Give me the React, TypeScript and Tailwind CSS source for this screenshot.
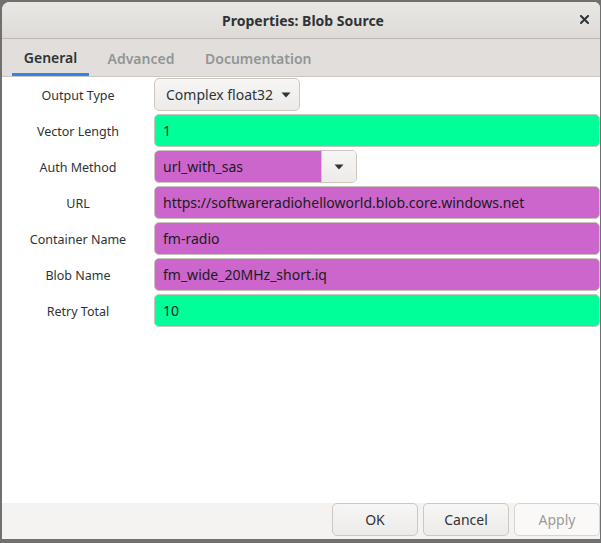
import React from 'react';

const font = { fontFamily: '"Noto Sans", "Open Sans", sans-serif' };

const Arrow = () => (
  <svg width="10" height="6" viewBox="0 0 10 6" className="shrink-0">
    <path d="M0.5 0.5 L9.5 0.5 L5 5.5 Z" fill="#2e3436" />
  </svg>
);

const Label = ({ text }: { text: string }) => (
  <div className="w-[152px] shrink-0 text-center text-[12.5px] text-[#2e3436] pt-[3px]">{text}</div>
);

const Field = ({ value, color }: { value: string; color: string }) => (
  <div
    className={`flex-1 h-[33px] flex items-center pl-[8px] text-[14px] text-[#1b1b1b] rounded-[5px] border border-[#c9c3bd] ${color}`}
  >
    {value}
  </div>
);

const Row = ({ label, children }: { label: string; children: React.ReactNode }) => (
  <div className="flex items-center h-[33px]">
    <Label text={label} />
    {children}
  </div>
);

const App = () => {
  return (
    <div className="w-[601px] h-[543px] bg-[#707070] pl-[2px] pt-[2px] pb-[4px] pr-[1px] overflow-hidden" style={font}>
      <div className="w-full h-full flex flex-col bg-white rounded-tl-[8px] rounded-tr-[6px] overflow-hidden">
        {/* title bar */}
        <div className="h-[37px] shrink-0 flex items-center bg-gradient-to-b from-[#e9e7e4] to-[#dedbd7] border-b border-[#c0b9b2] relative">
          <div className="flex-1 text-center font-bold text-[14px] text-[#2e3436] pl-[4px]">Properties: Blob Source</div>
          <div className="absolute right-[11px] top-[13px]">
            <svg width="9" height="9" viewBox="0 0 9 9">
              <path d="M1 1 L8 8 M8 1 L1 8" stroke="#2e3436" strokeWidth="2" strokeLinecap="square" />
            </svg>
          </div>
        </div>

        {/* tabs */}
        <div className="h-[38px] shrink-0 flex items-end bg-[#e1dedb] border-b border-[#cdc7c2] pl-[10px]">
          <div className="w-[77px] h-[37px] flex items-center justify-center border-b-[3px] border-[#3584e4] text-[14px] font-semibold text-[#2e3436] pt-[3px]">General</div>
          <div className="w-[104px] h-[37px] flex items-center justify-center text-[14px] font-semibold text-[#929595] pt-[1px]">Advanced</div>
          <div className="w-[120px] h-[37px] flex items-center justify-start pl-[12px] text-[14px] font-semibold text-[#929595] pt-[1px]">Documentation</div>
        </div>

        {/* params */}
        <div className="flex-1 flex flex-col gap-[3px] pt-[1px]">
          <Row label="Output Type">
            <div className="h-[33px] w-[146px] flex items-center gap-[8px] pl-[11px] rounded-[5px] border border-[#cdc7c2] bg-gradient-to-b from-[#f7f6f5] to-[#edebe9] text-[14px] text-[#2e3436]">
              Complex float32
              <Arrow />
            </div>
          </Row>
          <Row label="Vector Length">
            <Field value="1" color="bg-[#00ff99]" />
          </Row>
          <Row label="Auth Method">
            <div className="h-[33px] w-[203px] flex rounded-[5px] border border-[#cdc7c2] overflow-hidden">
              <div className="flex-1 flex items-center pl-[8px] bg-[#cc66cc] text-[14px] text-[#1b1b1b]">url_with_sas</div>
              <div className="w-[35px] flex items-center justify-center bg-gradient-to-b from-[#f7f6f5] to-[#edebe9] border-l border-[#cdc7c2]">
                <Arrow />
              </div>
            </div>
          </Row>
          <Row label="URL">
            <Field value="https://softwareradiohelloworld.blob.core.windows.net" color="bg-[#cc66cc]" />
          </Row>
          <Row label="Container Name">
            <Field value="fm-radio" color="bg-[#cc66cc]" />
          </Row>
          <Row label="Blob Name">
            <Field value="fm_wide_20MHz_short.iq" color="bg-[#cc66cc]" />
          </Row>
          <Row label="Retry Total">
            <Field value="10" color="bg-[#00ff99]" />
          </Row>
        </div>

        {/* action area */}
        <div className="h-[36px] shrink-0 bg-[#f4f3f1] flex items-start justify-end gap-[5px]">
          <div className="w-[86px] h-[33px] flex items-center justify-center rounded-[5px] border border-[#cdc7c2] bg-gradient-to-b from-[#f7f6f5] to-[#edebe9] text-[14px] text-[#2e3436]">OK</div>
          <div className="w-[86px] h-[33px] flex items-center justify-center rounded-[5px] border border-[#cdc7c2] bg-gradient-to-b from-[#f7f6f5] to-[#edebe9] text-[14px] text-[#2e3436]">Cancel</div>
          <div className="w-[86px] h-[33px] flex items-center justify-center rounded-[5px] border border-[#d8d4d0] bg-[#faf9f8] text-[14px] text-[#9a9c9c]">Apply</div>
        </div>
      </div>
    </div>
  );
};

export default App;
